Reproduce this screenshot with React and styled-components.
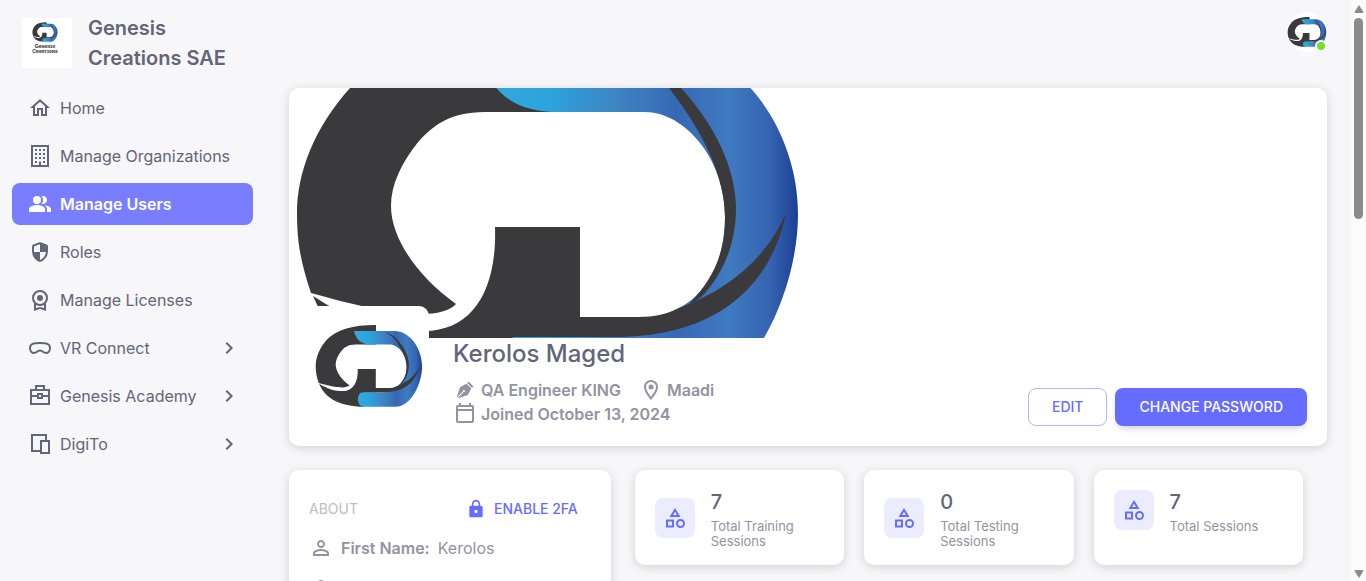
import React from "react";
import styled, { createGlobalStyle } from "styled-components";
import {
  MdPeopleAlt,
  MdChevronRight,
  MdOutlineLocationOn,
  MdLock,
  MdPersonOutline,
  MdOutlineCategory,
} from "react-icons/md";

const color = {
  page: "#f7f7f9",
  text: "#636578",
  muted: "#9293a1",
  faint: "#bbbcc4",
  primary: "#666cff",
  primarySoft: "#ececff",
  card: "#ffffff",
};

const GlobalStyle = createGlobalStyle`
  * { box-sizing: border-box; }
  body {
    margin: 0;
    background: ${color.page};
    color: ${color.text};
    font-family: Inter, "Liberation Sans", sans-serif;
    font-size: 16px;
    line-height: 24px;
  }
  h1, h2, h3, p, ul, dl, dd { margin: 0; padding: 0; font-weight: 400; }
  svg { display: block; flex-shrink: 0; }
`;

/* ---------- brand mark ---------- */

function BrandMark({ id, viewBox, ...rest }) {
  return (
    <svg viewBox={viewBox} aria-hidden="true" {...rest}>
      <defs>
        <linearGradient id={`${id}-ring`} gradientUnits="userSpaceOnUse" x1="190" y1="0" x2="510" y2="0">
          <stop offset="0" stopColor="#35a9df" />
          <stop offset="0.22" stopColor="#2ba3dc" />
          <stop offset="0.42" stopColor="#3f85c4" />
          <stop offset="0.62" stopColor="#3768b5" />
          <stop offset="0.78" stopColor="#3f7bc0" />
          <stop offset="0.91" stopColor="#3563b2" />
          <stop offset="1" stopColor="#1b3f92" />
        </linearGradient>
      </defs>
      <g fill="#3a3a3c">
        <path d="M292 -68V24H196C160 24 144 38 130 53C112 75 102 97 102 118C102 150 128 188 167 216C150 234 95 226 22 205C12 175 8 155 8 125C8 85 25 40 61 0C110 -48 180 -68 292 -68Z" />
        <path d="M24 208C60 232 100 243 135 243C185 243 208 200 206 139H291V249H235V317C120 312 55 280 24 208Z" />
      </g>
      <path
        fill={`url(#${id}-ring)`}
        d="M188 -40H385C455 -35 509 45 509 126C509 210 455 317 385 317H230C200 312 200 257 225 249H335L390 220C420 205 436 170 436 129C436 70 395 24 356 24H270C225 24 200 5 188 -40Z"
      />
      <g fill="#3a3a3c">
        <path d="M225 229H349C366 229 378 226 390 220C445 200 480 165 497 125C488 170 455 245 335 249H225Z" />
        <path d="M326 -36C355 -32 378 -15 392 0C425 36 447 80 447 120C447 152 437 178 421 199C415 207 410 212 400 216C425 190 436 165 436 129C436 90 415 45 380 0C365 -18 345 -32 326 -36Z" />
      </g>
    </svg>
  );
}

/* ---------- drawn icons ---------- */

const paths = {
  home: "M12 5.69L17 10.19V18H15V12H9V18H7V10.19L12 5.69M12 3L2 12H5V20H11V14H13V20H19V12H22",
  building:
    "M19 3V21H13V17.5H11V21H5V3H19M15 7H17V5H15V7M11 7H13V5H11V7M7 7H9V5H7V7M15 11H17V9H15V11M11 11H13V9H11V11M7 11H9V9H7V11M15 15H17V13H15V15M11 15H13V13H11V15M7 15H9V13H7V15M15 19H17V17H15V19M7 19H9V17H7V19M21 1H3V23H21V1Z",
  shield:
    "M11.3 2.26L5.3 4.51C4.52 4.81 4 5.55 4 6.39V11.09C4 16.14 7.41 20.85 12 22C16.59 20.85 20 16.14 20 11.09V6.39C20 5.56 19.48 4.81 18.7 4.52L12.7 2.27C12.25 2.09 11.75 2.09 11.3 2.26M12 12H18C17.5 15.7 15.1 18.9 12 19.93V12H6V6.4L12 4.14Z",
  license:
    "M9,10A3.04,3.04 0 0,1 12,7A3.04,3.04 0 0,1 15,10A3.04,3.04 0 0,1 12,13A3.04,3.04 0 0,1 9,10M12,19L16,20V16.92A7.54,7.54 0 0,1 12,18A7.54,7.54 0 0,1 8,16.92V20M12,4A5.78,5.78 0 0,0 7.76,5.74A5.78,5.78 0 0,0 6,10A5.78,5.78 0 0,0 7.76,14.23A5.78,5.78 0 0,0 12,16A5.78,5.78 0 0,0 16.24,14.23A5.78,5.78 0 0,0 18,10A5.78,5.78 0 0,0 16.24,5.74A5.78,5.78 0 0,0 12,4M20,10A8.04,8.04 0 0,1 19.43,12.8A7.84,7.84 0 0,1 18,15.28V23L12,21L6,23V15.28A7.9,7.9 0 0,1 4,10A7.68,7.68 0 0,1 6.33,4.36A7.73,7.73 0 0,1 12,2A7.73,7.73 0 0,1 17.67,4.36A7.68,7.68 0 0,1 20,10Z",
  pen: "M15.54,3.5L20.5,8.47L19.07,9.88L14.12,4.93L15.54,3.5M3.5,19.78L10,13.31C9.9,13 9.97,12.61 10.23,12.35C10.62,11.96 11.26,11.96 11.65,12.35C12.04,12.75 12.04,13.38 11.65,13.77C11.39,14.03 11,14.1 10.69,14L4.22,20.5L14.83,16.95L18.36,10.59L13.42,5.64L7.05,9.17L3.5,19.78Z",
  calendar:
    "M19 3H18V1H16V3H8V1H6V3H5A2 2 0 0 0 3 5V19A2 2 0 0 0 5 21H19A2 2 0 0 0 21 19V5A2 2 0 0 0 19 3M19 19H5V9H19M19 7H5V5H19Z",
};

const strokes = {
  goggles:
    "M12 7C8 7 6 7.2 4.6 7.9C2.8 8.8 2 10.3 2 12C2 14.8 3.6 17 6 17C8.6 17 9.6 14.6 12 14.6C14.4 14.6 15.4 17 18 17C20.4 17 22 14.8 22 12C22 10.3 21.2 8.8 19.4 7.9C18 7.2 16 7 12 7Z",
  briefcase: "M3 6H21V20H3ZM8 6V2H16V6M3 12H10M14 12H21M10 10H14V14H10Z",
  devices: "M18 8V3H4V19H12M13 9H21V21H13Z",
};

function Icon({ name, size = 24 }) {
  return (
    <svg width={size} height={size} viewBox="0 0 24 24" aria-hidden="true">
      {paths[name] ? (
        <path d={paths[name]} fill="currentColor" fillRule="evenodd" />
      ) : (
        <path d={strokes[name]} fill="none" stroke="currentColor" strokeWidth="2" />
      )}
    </svg>
  );
}

/* ---------- shell ---------- */

const Shell = styled.div`
  display: grid;
  grid-template-columns: 265px minmax(0, 1fr) 15px;
  height: 100vh;
  overflow: hidden;
`;

const Sidebar = styled.aside`
  padding: 13px 12px;
`;

const Brand = styled.a`
  display: flex;
  align-items: center;
  gap: 16px;
  padding-left: 10px;
  color: ${color.text};
  text-decoration: none;
`;

const BrandTile = styled.span`
  display: flex;
  flex-direction: column;
  align-items: center;
  width: 50px;
  height: 50px;
  padding: 4px 4px 0 0;
  flex-shrink: 0;
  background: ${color.card};
`;

const BrandCaption = styled.span`
  margin-top: 2px;
  color: #3a3a3c;
  font-size: 5px;
  font-weight: 700;
  line-height: 5px;
  text-align: center;
  font-variant: small-caps;
`;

const BrandName = styled.span`
  font-size: 20px;
  font-weight: 600;
  line-height: 30px;
`;

const NavList = styled.ul`
  display: flex;
  flex-direction: column;
  gap: 6px;
  margin-top: 14px;
  list-style: none;
`;

const NavLink = styled.a`
  display: flex;
  align-items: center;
  gap: 8px;
  height: 42px;
  padding: 0 12px 0 16px;
  border-radius: 8px;
  text-decoration: none;
  color: ${(p) => (p.$active ? "#ffffff" : color.text)};
  background: ${(p) => (p.$active ? "#787eff" : "transparent")};
  font-weight: ${(p) => (p.$active ? 600 : 400)};
`;

const NavLabel = styled.span`
  flex: 1;
  white-space: nowrap;
`;

const Main = styled.main`
  padding: 12px 24px 0;
  overflow: hidden;
`;

const TopBar = styled.header`
  display: flex;
  justify-content: flex-end;
  height: 76px;
`;

const UserButton = styled.button`
  position: relative;
  width: 40px;
  height: 40px;
  padding: 0;
  border: 0;
  border-radius: 50%;
  background: ${color.card};
`;

const OnlineDot = styled.span`
  position: absolute;
  right: 0;
  bottom: 0;
  width: 12px;
  height: 12px;
  border: 2px solid ${color.card};
  border-radius: 50%;
  background: #72e128;
`;

const Card = styled.section`
  background: ${color.card};
  border-radius: 10px;
  box-shadow: 0 2px 10px rgba(76, 78, 100, 0.22);
`;

/* ---------- profile ---------- */

const ProfileCard = styled(Card)`
  overflow: hidden;
`;

const Cover = styled.div`
  height: 250px;
`;

const ProfileBody = styled.div`
  display: flex;
  gap: 24px;
  padding: 0 20px 20px;
`;

const Portrait = styled.div`
  position: relative;
  width: 120px;
  height: 120px;
  margin-top: -32px;
  flex-shrink: 0;
  border: 5px solid ${color.card};
  border-radius: 10px;
  background: ${color.card};
`;

const ProfileInfo = styled.div`
  flex: 1;
`;

const ProfileName = styled.h1`
  margin-bottom: 8px;
  font-size: 24px;
  font-weight: 500;
  line-height: 32px;
`;

const FactList = styled.div`
  display: flex;
  flex-wrap: wrap;
  column-gap: 18px;
  max-width: 320px;
`;

const Fact = styled.span`
  display: flex;
  align-items: center;
  gap: 4px;
  color: ${color.muted};
  font-weight: 600;
  white-space: nowrap;
`;

const Actions = styled.div`
  display: flex;
  align-items: flex-end;
  gap: 8px;
`;

const Button = styled.button`
  display: flex;
  align-items: center;
  gap: 8px;
  height: 38px;
  padding: 0 23px;
  border: 1px solid transparent;
  border-radius: 8px;
  font: 500 14px/24px Inter, "Liberation Sans", sans-serif;
  white-space: nowrap;
  color: ${(p) => (p.$kind === "filled" ? "#ffffff" : color.primary)};
  background: ${(p) => (p.$kind === "filled" ? color.primary : "transparent")};
  border-color: ${(p) => (p.$kind === "outlined" ? "#b2b5ff" : "transparent")};
  box-shadow: ${(p) => (p.$kind === "filled" ? "0 4px 8px -4px rgba(76, 78, 100, 0.42)" : "none")};
`;

/* ---------- details ---------- */

const Lower = styled.div`
  display: flex;
  align-items: flex-start;
  gap: 24px;
  margin-top: 24px;
`;

const AboutCard = styled(Card)`
  flex: 0 0 31%;
  padding: 20px;
`;

const AboutHead = styled.div`
  display: flex;
  align-items: center;
  justify-content: space-between;
  margin-bottom: 8px;
`;

const AboutTitle = styled.h2`
  color: ${color.faint};
  font-size: 14px;
`;

const TextButton = styled(Button)`
  padding: 0 12px;
`;

const DetailList = styled.dl`
  display: flex;
  flex-direction: column;
  gap: 16px;
`;

const Detail = styled.div`
  display: flex;
  align-items: center;
  gap: 8px;
  color: ${color.muted};
`;

const DetailLabel = styled.dt`
  font-weight: 600;
`;

const Stats = styled.div`
  display: grid;
  grid-template-columns: repeat(3, minmax(0, 1fr));
  gap: 20px;
  flex: 1;
  padding-right: 24px;
`;

const StatCard = styled(Card)`
  padding: 16px 20px;
`;

const StatBody = styled.div`
  display: flex;
  align-items: center;
  gap: 16px;
`;

const StatIcon = styled.span`
  display: grid;
  place-items: center;
  width: 40px;
  height: 40px;
  flex-shrink: 0;
  border-radius: 8px;
  color: ${color.primary};
  background: ${color.primarySoft};
`;

const StatValue = styled.p`
  font-size: 20px;
  font-weight: 500;
  line-height: 33px;
`;

const StatLabel = styled.p`
  color: ${color.muted};
  font-size: 13px;
  line-height: 15px;
`;

/* ---------- scroll rail ---------- */

const Rail = styled.div`
  display: flex;
  flex-direction: column;
  align-items: center;
  justify-content: space-between;
  padding: 5px 0 3px;
  background: #fcfcfc;
`;

const RailTop = styled.div`
  display: flex;
  flex-direction: column;
  align-items: center;
  gap: 5px;
  height: 40%;
`;

const Thumb = styled.div`
  width: 9px;
  height: 201px;
  border-radius: 5px;
  background: #8b8b8b;
`;

const nav = [
  { label: "Home", icon: <Icon name="home" /> },
  { label: "Manage Organizations", icon: <Icon name="building" /> },
  { label: "Manage Users", icon: <MdPeopleAlt size={24} />, active: true },
  { label: "Roles", icon: <Icon name="shield" /> },
  { label: "Manage Licenses", icon: <Icon name="license" /> },
  { label: "VR Connect", icon: <Icon name="goggles" />, more: true },
  { label: "Genesis Academy", icon: <Icon name="briefcase" />, more: true },
  { label: "DigiTo", icon: <Icon name="devices" />, more: true },
];

const stats = [
  { value: 7, label: "Total Training Sessions" },
  { value: 0, label: "Total Testing Sessions" },
  { value: 7, label: "Total Sessions" },
];

const details = [
  { id: "first", label: "First Name:", value: "Kerolos" },
  { id: "last", label: "", value: "" },
];

export default function App() {
  return (
    <>
      <GlobalStyle />
      <Shell>
        <Sidebar>
          <Brand href="#home">
            <BrandTile>
              <BrandMark id="tile" viewBox="0 -74 518 398" width="26" height="20" />
              <BrandCaption>
                Genesis
                <br />
                Creations
              </BrandCaption>
            </BrandTile>
            <BrandName>Genesis Creations SAE</BrandName>
          </Brand>
          <nav>
            <NavList>
              {nav.map((item) => (
                <li key={item.label}>
                  <NavLink href="#" $active={item.active} aria-current={item.active ? "page" : undefined}>
                    {item.icon}
                    <NavLabel>{item.label}</NavLabel>
                    {item.more && <MdChevronRight size={24} />}
                  </NavLink>
                </li>
              ))}
            </NavList>
          </nav>
        </Sidebar>

        <Main>
          <TopBar>
            <UserButton aria-label="Account">
              <BrandMark id="user" viewBox="0 -134 518 518" width="40" height="40" />
              <OnlineDot />
            </UserButton>
          </TopBar>

          <ProfileCard>
            <Cover>
              <BrandMark id="cover" viewBox="0 0 518 250" width="518" height="250" />
            </Cover>
            <ProfileBody>
              <Portrait>
                <BrandMark id="portrait" viewBox="0 -134 518 518" width="110" height="110" />
              </Portrait>
              <ProfileInfo>
                <ProfileName>Kerolos Maged</ProfileName>
                <FactList>
                  <Fact>
                    <Icon name="pen" />
                    QA Engineer KING
                  </Fact>
                  <Fact>
                    <MdOutlineLocationOn size={24} />
                    Maadi
                  </Fact>
                  <Fact>
                    <Icon name="calendar" />
                    Joined October 13, 2024
                  </Fact>
                </FactList>
              </ProfileInfo>
              <Actions>
                <Button $kind="outlined">EDIT</Button>
                <Button $kind="filled">CHANGE PASSWORD</Button>
              </Actions>
            </ProfileBody>
          </ProfileCard>

          <Lower>
            <AboutCard>
              <AboutHead>
                <AboutTitle>ABOUT</AboutTitle>
                <TextButton>
                  <MdLock size={20} />
                  ENABLE 2FA
                </TextButton>
              </AboutHead>
              <DetailList>
                {details.map((d) => (
                  <Detail key={d.id}>
                    <MdPersonOutline size={24} />
                    <DetailLabel>{d.label}</DetailLabel>
                    <dd>{d.value}</dd>
                  </Detail>
                ))}
              </DetailList>
            </AboutCard>
            <Stats>
              {stats.map((s) => (
                <StatCard key={s.label}>
                  <StatBody>
                    <StatIcon>
                      <MdOutlineCategory size={24} />
                    </StatIcon>
                    <div>
                      <StatValue>{s.value}</StatValue>
                      <StatLabel>{s.label}</StatLabel>
                    </div>
                  </StatBody>
                </StatCard>
              ))}
            </Stats>
          </Lower>
        </Main>

        <Rail aria-hidden="true">
          <RailTop>
            <svg width="10" height="8" viewBox="0 0 10 8">
              <path d="M5 0L9.500 7Q9.500 8 8.500 8H1.500Q0.500 8 0.500 7Z" fill="#8b8b8b" />
            </svg>
            <Thumb />
          </RailTop>
          <svg width="10" height="8" viewBox="0 0 10 8">
            <path d="M5 8L9.500 1Q9.500 0 8.500 0H1.500Q0.500 0 0.500 1Z" fill="#8b8b8b" />
          </svg>
        </Rail>
      </Shell>
    </>
  );
}
